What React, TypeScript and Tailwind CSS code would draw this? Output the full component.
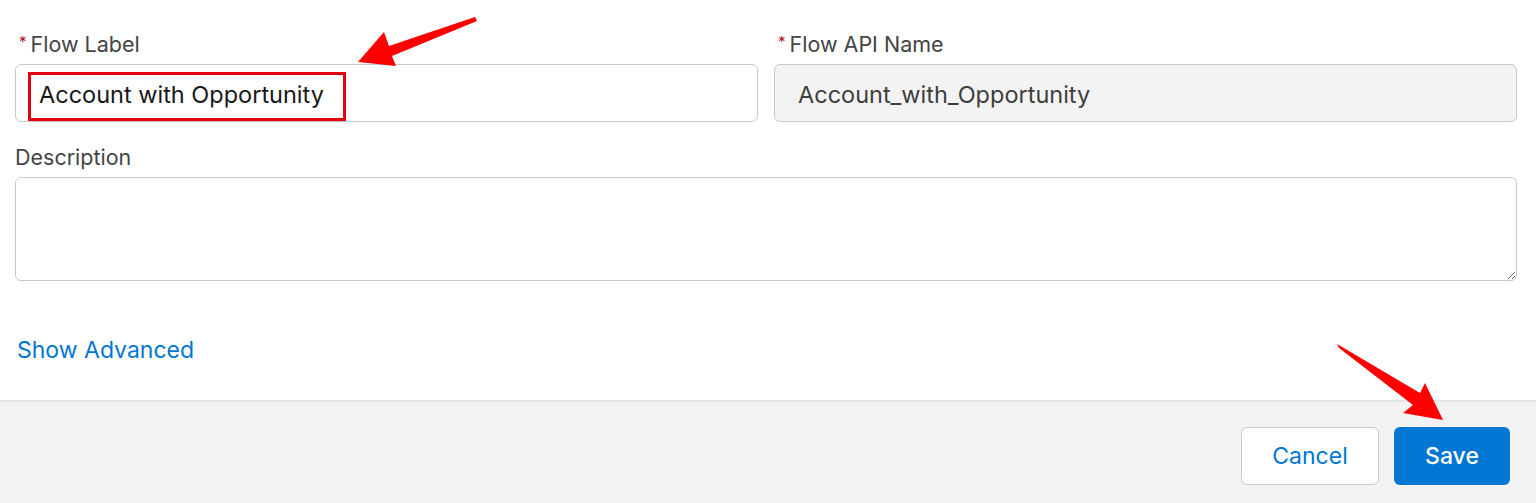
import React from "react";

const font = { fontFamily: "Inter, 'Noto Sans', 'Liberation Sans', sans-serif" };

function Label({ text, required }: { text: string; required?: boolean }) {
  return (
    <div className="flex items-center h-[28px] mb-[6px] pt-[1px] text-[21.5px] text-[#444444] leading-none">
      {required && <span className="text-[#ba0517] text-[15px] mr-[4px] ml-[4px] -mt-[6px]">*</span>}
      <span>{text}</span>
    </div>
  );
}

export default function App() {
  return (
    <div className="relative w-[1536px] h-[503px] bg-white overflow-hidden flex flex-col" style={font}>
      {/* Form body */}
      <div className="flex-1 pl-[15px] pr-[19px] pt-[30px]">
        <div className="grid grid-cols-2 gap-[16px]">
          <div>
            <Label text="Flow Label" required />
            <div className="relative h-[58px] rounded-[6px] border border-[#c9c9c9] bg-white flex items-center pl-[23px] pt-[3px] text-[23.5px] text-[#181818]">
              <span>Account with Opportunity</span>
              <div className="absolute left-[12px] top-[7px] w-[318px] h-[49px] border-[3px] border-[#e3000f]" />
            </div>
          </div>
          <div>
            <Label text="Flow API Name" required />
            <div className="h-[58px] rounded-[6px] border border-[#c9c9c9] bg-[#f3f3f3] flex items-center pl-[23px] pt-[3px] text-[23.5px] text-[#3e3e3c]">
              Account_with_Opportunity
            </div>
          </div>
        </div>

        <div className="mt-[21px]">
          <Label text="Description" />
          <textarea className="block w-full h-[104px] rounded-[6px] border border-[#c9c9c9] bg-white outline-none" />
        </div>

        <div className="mt-[58px] pl-[2px] text-[23px] text-[#0176d3] leading-none">Show Advanced</div>
      </div>

      {/* Footer */}
      <div className="h-[103px] shrink-0 bg-[#f3f3f3] border-t-2 border-[#e5e5e5] flex items-start justify-end gap-[15px] pr-[26px] pt-[25px]">
        <button className="w-[138px] h-[58px] rounded-[6px] border border-[#c9c9c9] bg-white text-[23px] text-[#0176d3]">
          Cancel
        </button>
        <button className="w-[116px] h-[58px] rounded-[6px] bg-[#0176d3] text-[23px] font-medium text-white">
          Save
        </button>
      </div>

      {/* Annotation arrows */}
      <svg className="absolute inset-0 pointer-events-none" width="1536" height="503" viewBox="0 0 1536 503">
        <polygon
          points="475,17 389,46 384,32 358,62 396,66 392,56 477,21"
          fill="#ff0000"
        />
        <polygon
          points="1337,344 1420,393 1425,383 1443,420 1403,413 1413,405 1339,348"
          fill="#ff0000"
        />
      </svg>
    </div>
  );
}
